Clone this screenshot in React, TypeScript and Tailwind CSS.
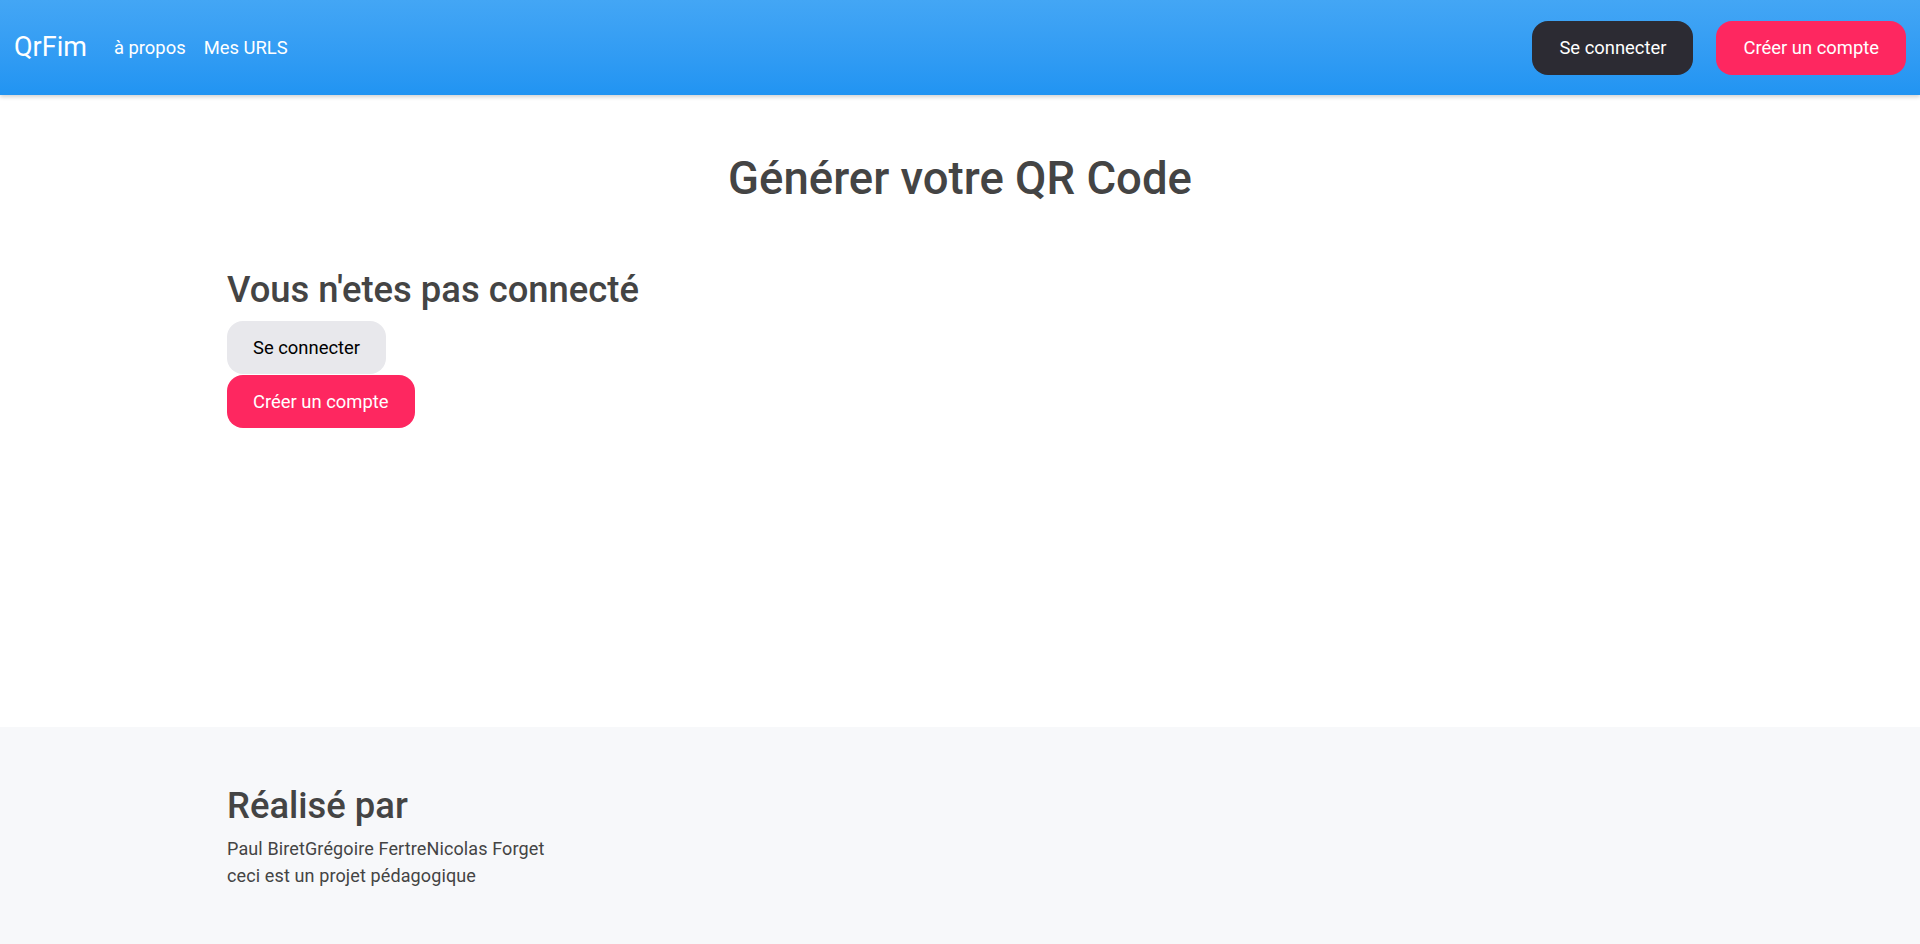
export default function App() {
  return (
    <div className="flex min-h-screen flex-col bg-white font-['Roboto','Liberation_Sans',sans-serif] text-[#424242]">
      {/* Navbar */}
      <nav className="relative z-10 flex h-[95px] items-center justify-between bg-gradient-to-b from-[#43a6f5] to-[#2194f2] pl-[14px] pr-[14px] shadow-[0_2px_4px_rgba(0,0,0,0.18)]">
        <div className="flex items-center">
          <span className="text-[27px] leading-none text-white">QrFim</span>
          <a className="ml-[27px] text-[18.4px] text-white">à propos</a>
          <a className="ml-[18px] text-[18.4px] text-white">Mes URLS</a>
        </div>
        <div className="flex items-center gap-[23px]">
          <button className="h-[54px] rounded-[16px] bg-[#2c2b33] px-[27px] text-[18.4px] text-white">
            Se connecter
          </button>
          <button className="h-[54px] rounded-[16px] bg-[#fe2760] px-[27px] text-[18.4px] text-white">
            Créer un compte
          </button>
        </div>
      </nav>

      {/* Main */}
      <main className="flex-1">
        <h1 className="mt-[61px] text-center text-[45.5px] font-medium leading-[46px] text-[#444444]">
          Générer votre QR Code
        </h1>
        <div className="mx-auto mt-[70px] max-w-[1466px]">
          <h2 className="text-[36.4px] font-medium leading-[36px] text-[#444444]">Vous n'etes pas connecté</h2>
          <div className="mt-[13px] flex flex-col items-start">
            <button className="h-[53px] rounded-[16px] bg-[#e8e8ec] px-[26px] text-[18.4px] text-black">
              Se connecter
            </button>
            <button className="mt-[1px] h-[53px] rounded-[16px] bg-[#fe2760] px-[26px] text-[18.4px] text-white">
              Créer un compte
            </button>
          </div>
        </div>
      </main>

      {/* Footer */}
      <footer className="bg-[#f7f8fa] pb-[55px] pt-[61px]">
        <div className="mx-auto max-w-[1466px]">
          <h2 className="text-[36.4px] font-medium leading-[36px] text-[#444444]">Réalisé par</h2>
          <div className="mt-[11px] text-[18px] leading-[27px] tracking-[0.12px] text-[#444444]">
            <div>
              <span>Paul Biret</span>
              <span>Grégoire Fertre</span>
              <span>Nicolas Forget</span>
            </div>
            <div>ceci est un projet pédagogique</div>
          </div>
        </div>
      </footer>
    </div>
  )
}
